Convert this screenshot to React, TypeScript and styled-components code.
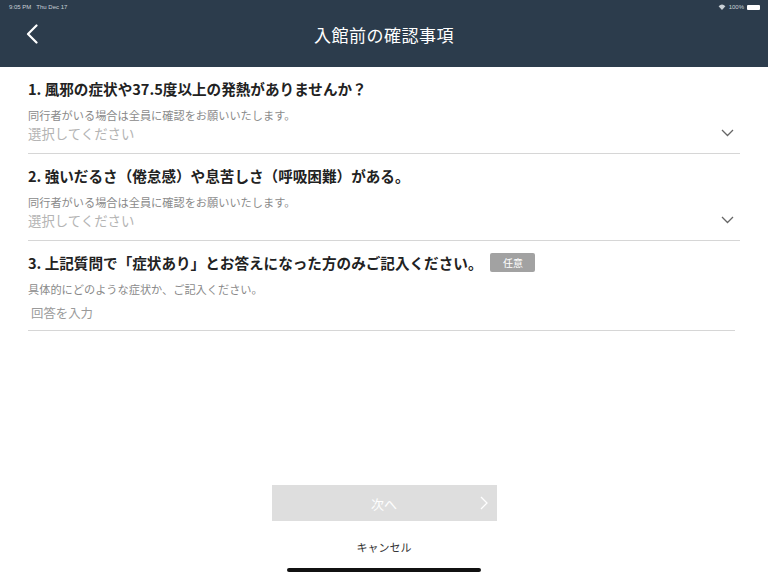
import styled, { createGlobalStyle } from 'styled-components';

const GlobalStyle = createGlobalStyle`
  html, body {
    margin: 0;
    padding: 0;
    background: #fff;
  }
  body {
    font-family: "Noto Sans CJK JP", "Noto Sans", sans-serif;
    color: #222;
  }
`;

type Question = {
  title: string;
  note: string;
  kind: 'select' | 'text';
  optional?: boolean;
};

const questions: Question[] = [
  {
    title: '1. 風邪の症状や37.5度以上の発熱がありませんか？',
    note: '同行者がいる場合は全員に確認をお願いいたします。',
    kind: 'select',
  },
  {
    title: '2. 強いだるさ（倦怠感）や息苦しさ（呼吸困難）がある。',
    note: '同行者がいる場合は全員に確認をお願いいたします。',
    kind: 'select',
  },
  {
    title: '3. 上記質問で「症状あり」とお答えになった方のみご記入ください。',
    note: '具体的にどのような症状か、ご記入ください。',
    kind: 'text',
    optional: true,
  },
];

export default function App() {
  return (
    <>
      <GlobalStyle />
      <Screen>
        <Header>
          <StatusBar>
            <span>9:05 PM&nbsp;&nbsp;&nbsp;Thu Dec 17</span>
            <StatusRight>
              <svg width="8" height="6" viewBox="0 0 8 6">
                <path d="M4 6 L0.6 2.2 A5 5 0 0 1 7.4 2.2 Z" fill="#c9d0d6" />
              </svg>
              <span>100%</span>
              <Battery />
            </StatusRight>
          </StatusBar>
          <NavBar>
            <BackButton aria-label="back">
              <svg width="12" height="20" viewBox="0 0 12 20">
                <path d="M10.5 1.5 L2 10 L10.5 18.5" fill="none" stroke="#fff" strokeWidth="2.2" strokeLinecap="round" strokeLinejoin="round" />
              </svg>
            </BackButton>
            <Title>入館前の確認事項</Title>
          </NavBar>
        </Header>

        <Form>
          {questions.map((q) => (
            <Field key={q.title}>
              <FieldTitle>
                {q.title}
                {q.optional && <Badge>任意</Badge>}
              </FieldTitle>
              <Note>{q.note}</Note>
              {q.kind === 'select' ? (
                <SelectRow>
                  <Placeholder>選択してください</Placeholder>
                  <svg width="13" height="8" viewBox="0 0 13 8">
                    <path d="M1 1 L6.5 6.5 L12 1" fill="none" stroke="#666" strokeWidth="1.3" />
                  </svg>
                </SelectRow>
              ) : (
                <TextRow>
                  <InputPlaceholder>回答を入力</InputPlaceholder>
                </TextRow>
              )}
            </Field>
          ))}
        </Form>

        <Footer>
          <NextButton disabled>
            次へ
            <NextChevron width="8" height="14" viewBox="0 0 8 14">
              <path d="M1 1 L7 7 L1 13" fill="none" stroke="#fff" strokeWidth="1.3" />
            </NextChevron>
          </NextButton>
          <CancelLink>キャンセル</CancelLink>
          <HomeIndicator />
        </Footer>
      </Screen>
    </>
  );
}

const Screen = styled.div`
  width: 768px;
  height: 576px;
  display: flex;
  flex-direction: column;
  overflow: hidden;
`;

const Header = styled.header`
  background: #2c3c4c;
  height: 67px;
  flex-shrink: 0;
`;

const StatusBar = styled.div`
  height: 14px;
  display: flex;
  align-items: center;
  justify-content: space-between;
  padding: 0 8px 0 9px;
  font-family: "Liberation Sans", sans-serif;
  font-size: 6px;
  color: #c9d0d6;
`;

const StatusRight = styled.div`
  display: flex;
  align-items: center;
  gap: 3px;
`;

const Battery = styled.span`
  display: inline-block;
  width: 13px;
  height: 5px;
  background: #fff;
  border-radius: 1px;
`;

const NavBar = styled.div`
  height: 40px;
  display: flex;
  align-items: center;
  justify-content: center;
  position: relative;
`;

const BackButton = styled.button`
  position: absolute;
  left: 26px;
  top: 10px;
  background: none;
  border: none;
  padding: 0;
  display: flex;
`;

const Title = styled.h1`
  margin: 0;
  font-size: 17px;
  font-weight: 400;
  color: #fff;
  letter-spacing: 0.5px;
`;

const Form = styled.main`
  flex: 1;
  padding: 11px 28px 0 28px;
`;

const Field = styled.section`
  margin-bottom: 11px;
`;

const FieldTitle = styled.h2`
  margin: 0;
  font-size: 14.6px;
  font-weight: 700;
  color: #222;
  display: flex;
  align-items: center;
  height: 20px;
`;

const Badge = styled.span`
  display: inline-flex;
  align-items: center;
  justify-content: center;
  width: 45px;
  height: 19px;
  margin-left: 8px;
  background: #a2a2a2;
  color: #fff;
  font-size: 10px;
  font-weight: 400;
  border-radius: 2px;
`;

const Note = styled.p`
  margin: 10px 0 0;
  font-size: 11.2px;
  line-height: 14px;
  color: #8a8a8a;
`;

const SelectRow = styled.div`
  display: flex;
  align-items: center;
  justify-content: space-between;
  width: 712px;
  height: 32px;
  padding: 0 6px 9px 0;
  box-sizing: border-box;
  border-bottom: 1px solid #d6d6d6;
`;

const Placeholder = styled.span`
  font-size: 13.4px;
  line-height: 18px;
  color: #b4b4b4;
`;

const TextRow = styled.div`
  width: 707px;
  height: 35px;
  box-sizing: border-box;
  display: flex;
  align-items: center;
  border-bottom: 1px solid #d6d6d6;
`;

const InputPlaceholder = styled.span`
  font-size: 12.4px;
  color: #9a9a9a;
  margin-left: 3px;
`;

const Footer = styled.footer`
  display: flex;
  flex-direction: column;
  align-items: center;
  padding-bottom: 4px;
`;

const NextButton = styled.button`
  position: relative;
  width: 225px;
  height: 36px;
  border: none;
  background: #dedede;
  color: #fff;
  font-family: "Noto Sans CJK JP", sans-serif;
  font-size: 13px;
`;

const NextChevron = styled.svg`
  position: absolute;
  right: 9px;
  top: 11px;
`;

const CancelLink = styled.div`
  margin-top: 16px;
  font-size: 11px;
  color: #333;
  height: 20px;
  line-height: 20px;
`;

const HomeIndicator = styled.div`
  margin-top: 11px;
  width: 194px;
  height: 4px;
  border-radius: 2px;
  background: #111;
`;
